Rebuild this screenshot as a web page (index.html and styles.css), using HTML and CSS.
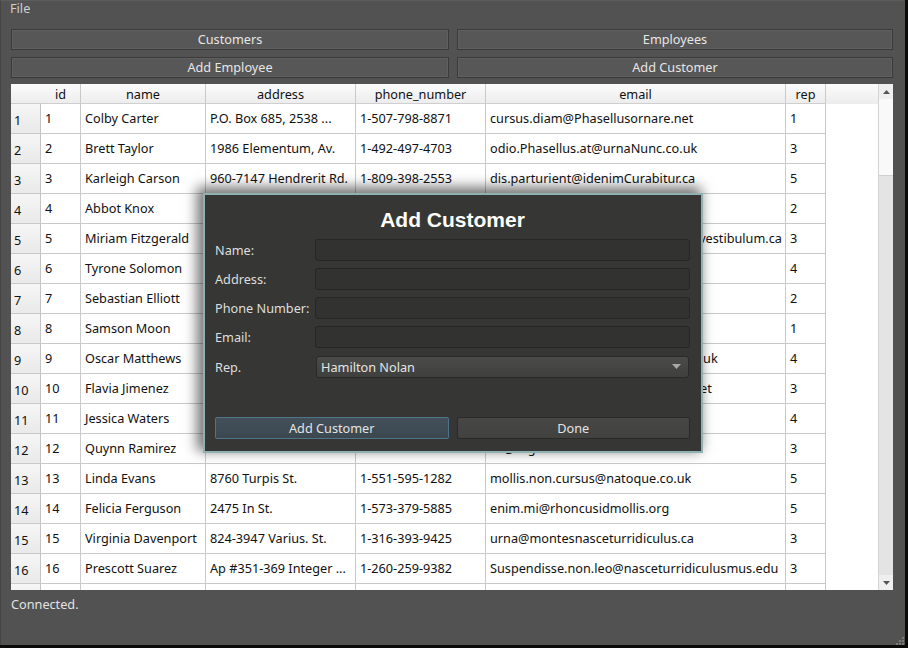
FILE: index.html
```html
<!DOCTYPE html>
<html>
<head>
<meta charset="utf-8">
<link rel="stylesheet" href="styles.css">
</head>
<body>
<div class="window">
  <div class="menubar"><span class="menu-item">File</span></div>
  <div class="actions">
    <button class="btn">Customers</button>
    <button class="btn">Employees</button>
    <button class="btn">Add Employee</button>
    <button class="btn">Add Customer</button>
  </div>
  <div class="tableview">
    <div class="grid-area">
      <div class="row head">
        <div class="c corner"></div><div class="c">id</div><div class="c">name</div><div class="c">address</div><div class="c">phone_number</div><div class="c">email</div><div class="c">rep</div>
      </div>
      <div class="row"><div class="c vh">1</div><div class="c">1</div><div class="c">Colby Carter</div><div class="c">P.O. Box 685, 2538 ...</div><div class="c">1-507-798-8871</div><div class="c">cursus.diam@Phasellusornare.net</div><div class="c">1</div></div>
      <div class="row"><div class="c vh">2</div><div class="c">2</div><div class="c">Brett Taylor</div><div class="c">1986 Elementum, Av.</div><div class="c">1-492-497-4703</div><div class="c">odio.Phasellus.at@urnaNunc.co.uk</div><div class="c">3</div></div>
      <div class="row"><div class="c vh">3</div><div class="c">3</div><div class="c">Karleigh Carson</div><div class="c">960-7147 Hendrerit Rd.</div><div class="c">1-809-398-2553</div><div class="c">dis.parturient@idenimCurabitur.ca</div><div class="c">5</div></div>
      <div class="row"><div class="c vh">4</div><div class="c">4</div><div class="c">Abbot Knox</div><div class="c">Ap #508-8214 Senectus Av.</div><div class="c">1-434-984-8505</div><div class="c">mollis.Duis@ante.ca</div><div class="c">2</div></div>
      <div class="row"><div class="c vh">5</div><div class="c">5</div><div class="c">Miriam Fitzgerald</div><div class="c">P.O. Box 101, 2553 ...</div><div class="c">1-291-818-9146</div><div class="c">Suspendisse.aliquet@montesnascevestibulum.ca</div><div class="c">3</div></div>
      <div class="row"><div class="c vh">6</div><div class="c">6</div><div class="c">Tyrone Solomon</div><div class="c">4370 Ornare St.</div><div class="c">1-617-223-2617</div><div class="c">arcu@lacus.org</div><div class="c">4</div></div>
      <div class="row"><div class="c vh">7</div><div class="c">7</div><div class="c">Sebastian Elliott</div><div class="c">7541 Non Rd.</div><div class="c">1-737-282-4730</div><div class="c">nunc@nec.com</div><div class="c">2</div></div>
      <div class="row"><div class="c vh">8</div><div class="c">8</div><div class="c">Samson Moon</div><div class="c">903-3580 Ut St.</div><div class="c">1-874-690-4541</div><div class="c">ac@egestas.edu</div><div class="c">1</div></div>
      <div class="row"><div class="c vh">9</div><div class="c">9</div><div class="c">Oscar Matthews</div><div class="c">5528 Ac Road</div><div class="c">1-305-515-0772</div><div class="c">felis.ullamcorper@Curabiturutm.co.uk</div><div class="c">4</div></div>
      <div class="row"><div class="c vh">10</div><div class="c">10</div><div class="c">Flavia Jimenez</div><div class="c">1254 Lectus Avenue</div><div class="c">1-846-171-2242</div><div class="c">Aliquam.ultrices@Aeneanegestas.net</div><div class="c">3</div></div>
      <div class="row"><div class="c vh">11</div><div class="c">11</div><div class="c">Jessica Waters</div><div class="c">245-7112 Sit St.</div><div class="c">1-990-213-8347</div><div class="c">tellus@mollis.ca</div><div class="c">4</div></div>
      <div class="row"><div class="c vh">12</div><div class="c">12</div><div class="c">Quynn Ramirez</div><div class="c">3012 Mauris Road</div><div class="c">1-224-671-9011</div><div class="c">ac@sagittis.com</div><div class="c">3</div></div>
      <div class="row"><div class="c vh">13</div><div class="c">13</div><div class="c">Linda Evans</div><div class="c">8760 Turpis St.</div><div class="c">1-551-595-1282</div><div class="c">mollis.non.cursus@natoque.co.uk</div><div class="c">5</div></div>
      <div class="row"><div class="c vh">14</div><div class="c">14</div><div class="c">Felicia Ferguson</div><div class="c">2475 In St.</div><div class="c">1-573-379-5885</div><div class="c">enim.mi@rhoncusidmollis.org</div><div class="c">5</div></div>
      <div class="row"><div class="c vh">15</div><div class="c">15</div><div class="c">Virginia Davenport</div><div class="c">824-3947 Varius. St.</div><div class="c">1-316-393-9425</div><div class="c">urna@montesnasceturridiculus.ca</div><div class="c">3</div></div>
      <div class="row"><div class="c vh">16</div><div class="c">16</div><div class="c">Prescott Suarez</div><div class="c">Ap #351-369 Integer ...</div><div class="c">1-260-259-9382</div><div class="c">Suspendisse.non.leo@nasceturridiculusmus.edu</div><div class="c">3</div></div>
      <div class="row"><div class="c vh"></div><div class="c"></div><div class="c"></div><div class="c"></div><div class="c"></div><div class="c"></div><div class="c"></div></div>
    </div>
    <div class="vscroll">
      <div class="sb-arrow"><svg width="7" height="4" viewBox="0 0 7 4"><polygon points="0,4 7,4 3.5,0" fill="#555"/></svg></div>
      <div class="sb-track"><div class="sb-handle"></div></div>
      <div class="sb-arrow"><svg width="7" height="4" viewBox="0 0 7 4"><polygon points="0,0 7,0 3.5,4" fill="#555"/></svg></div>
    </div>
  </div>
  <div class="statusbar">Connected.</div>
  <div class="grip"><svg width="10" height="10" viewBox="0 0 10 10"><g fill="#7a7a7a"><rect x="8" y="0" width="2" height="2"/><rect x="5" y="3" width="2" height="2"/><rect x="8" y="3" width="2" height="2"/><rect x="2" y="6" width="2" height="2"/><rect x="5" y="6" width="2" height="2"/><rect x="8" y="6" width="2" height="2"/></g></svg></div>

  <div class="dialog">
    <div class="dlg-title">Add Customer</div>
    <div class="form">
      <label class="lbl">Name:</label><div class="field"></div>
      <label class="lbl">Address:</label><div class="field"></div>
      <label class="lbl">Phone Number:</label><div class="field"></div>
      <label class="lbl">Email:</label><div class="field"></div>
      <label class="lbl">Rep.</label>
      <div class="combo"><span>Hamilton Nolan</span><svg width="9" height="5" viewBox="0 0 9 5"><polygon points="0,0 9,0 4.5,5" fill="#a8a8a8"/></svg></div>
    </div>
    <div class="dlg-buttons">
      <button class="dbtn primary">Add Customer</button>
      <button class="dbtn">Done</button>
    </div>
  </div>
</div>
</body>
</html>
```

FILE: styles.css
```css
html, body {
  margin: 0;
  padding: 0;
}
body {
  width: 908px;
  height: 648px;
  background: #0b0b0a;
  font-family: "Noto Sans", "Open Sans", sans-serif;
  font-size: 12.7px;
  overflow: hidden;
}
.window {
  position: relative;
  width: 905px;
  height: 645px;
  background: #525252;
  border-left: 1px solid #454545;
  border-top: 1px solid #5c5c5c;
  box-sizing: border-box;
  display: flex;
  flex-direction: column;
}
.menubar {
  height: 21px;
  padding-left: 9px;
  color: #cfcfcf;
  line-height: 15px;
}
.actions {
  display: grid;
  grid-template-columns: 438px 436px;
  column-gap: 8px;
  row-gap: 7px;
  margin: 7px 0 0 10px;
}
.btn {
  height: 21px;
  margin: 0;
  padding: 0;
  font-family: inherit;
  font-size: 12.7px;
  color: #e6e6e6;
  background: #575757;
  border: 1px solid #3b3b3b;
  box-shadow: inset 0 0 0 1px #5f5f5f;
  line-height: 17px;
}
.tableview {
  margin: 6px 0 0 10px;
  width: 882px;
  height: 506px;
  background: #ffffff;
  display: flex;
  overflow: hidden;
}
.grid-area {
  flex: 1;
  overflow: hidden;
  background: #fff;
}
.row {
  display: grid;
  grid-template-columns: 30px 40px 125px 150px 130px 300px 40px;
  height: 30px;
}
.row .c {
  box-sizing: border-box;
  border-right: 1px solid #c9c9c9;
  border-bottom: 1px solid #c9c9c9;
  padding-left: 4px;
  white-space: nowrap;
  overflow: hidden;
  color: #111;
  line-height: 29px;
}
.row.head {
  height: 20px;
  background: linear-gradient(#fbfbfb, #ececec);
}
.row.head .c {
  text-align: center;
  padding-left: 0;
  padding-top: 2px;
  line-height: 17px;
  border-bottom: 1px solid #cfcfcf;
}
.row.head .corner {
  border-right: none;
}
.row .vh {
  background: linear-gradient(#f6f6f6, #e9e9e9);
  padding-left: 3px;
  padding-top: 3px;
  line-height: 27px;
  border-right: 1px solid #c4c4c4;
}
.vscroll {
  width: 14px;
  background: #e4e4e4;
  display: flex;
  flex-direction: column;
  border-left: 1px solid #d4d4d4;
}
.sb-arrow {
  height: 15px;
  display: flex;
  align-items: center;
  justify-content: center;
  background: #efefef;
}
.sb-track {
  flex: 1;
  background: #e4e4e4;
}
.sb-handle {
  height: 76px;
  background: #f9f9f9;
  border-bottom: 1px solid #d0d0d0;
}
.statusbar {
  padding: 6px 0 0 10px;
  color: #e2e2e2;
  line-height: 16px;
}
.grip {
  position: absolute;
  right: 1px;
  bottom: 2px;
  width: 10px;
  height: 10px;
}
.dialog {
  position: absolute;
  left: 202px;
  top: 192px;
  width: 500px;
  height: 260px;
  box-sizing: border-box;
  background: #363734;
  border: 2px solid #8fb1b1;
  box-shadow: -4px -4px 12px 2px rgba(0, 0, 0, 0.55);
  padding: 0 11px 12px 10px;
  display: flex;
  flex-direction: column;
  color: #dedede;
}
.dlg-title {
  height: 44px;
  text-align: center;
  font-family: "Liberation Sans", Arial, sans-serif;
  font-weight: bold;
  font-size: 21px;
  color: #ffffff;
  line-height: 50px;
}
.form {
  display: grid;
  grid-template-columns: 100px 1fr;
  row-gap: 7px;
  align-items: center;
}
.lbl {
  line-height: 16px;
}
.field {
  height: 22px;
  box-sizing: border-box;
  background: #323330;
  border: 1px solid #262725;
  border-radius: 3px;
}
.combo {
  height: 22px;
  box-sizing: border-box;
  margin: 1px 1px 0 1px;
  background: linear-gradient(#4b4c49, #3f403d);
  border: 1px solid #2a2b28;
  border-radius: 3px;
  display: flex;
  align-items: center;
  justify-content: space-between;
  padding: 0 7px 1px 4px;
  color: #e4e4e4;
}
.dlg-buttons {
  margin-top: auto;
  display: grid;
  grid-template-columns: 1fr 1fr;
  column-gap: 8px;
}
.dbtn {
  height: 22px;
  margin: 0;
  padding: 0;
  font-family: inherit;
  font-size: 12.7px;
  color: #e4e4e4;
  background: linear-gradient(#474846, #41423f);
  border: 1px solid #292a28;
  border-radius: 2px;
  line-height: 19px;
}
.dbtn.primary {
  background: linear-gradient(#43505a, #3b4850);
  border: 1px solid #4f7387;
}
```
